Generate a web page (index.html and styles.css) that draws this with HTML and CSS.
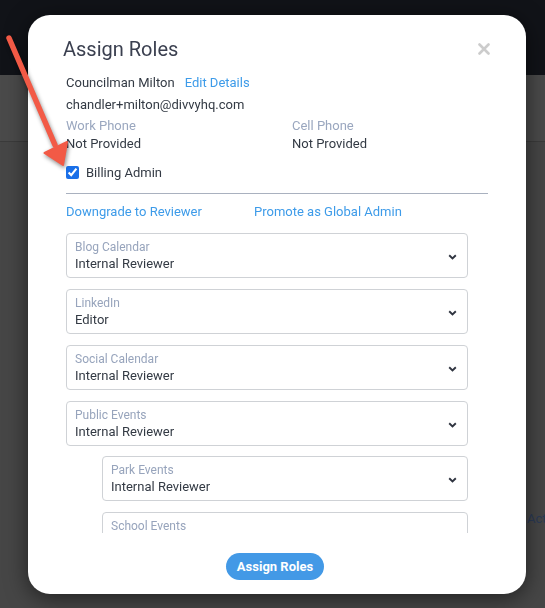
FILE: index.html
```html
<!DOCTYPE html>
<html>
<head>
<meta charset="utf-8">
<link rel="stylesheet" href="styles.css">
</head>
<body>
<div class="page">
  <div class="topbar"></div>
  <div class="band"></div>
  <div class="main"><span class="act">Actions</span></div>
</div>

<div class="modal">
  <div class="modal-head">
    <h2 class="title">Assign Roles</h2>
    <svg class="close" width="12" height="12" viewBox="0 0 12 12"><path d="M1.5 1.5 L10.5 10.5 M10.5 1.5 L1.5 10.5" stroke="#cccccc" stroke-width="2.6" stroke-linecap="round"/></svg>
  </div>
  <div class="modal-body">
    <div class="row name-row"><span class="name">Councilman Milton</span><a class="link edit">Edit Details</a></div>
    <div class="row email">chandler+milton@divvyhq.com</div>
    <div class="phones">
      <div class="phone"><div class="plabel">Work Phone</div><div class="pval">Not Provided</div></div>
      <div class="phone"><div class="plabel">Cell Phone</div><div class="pval">Not Provided</div></div>
    </div>
    <label class="check-row"><input type="checkbox" checked class="cb"><span>Billing Admin</span></label>
    <div class="divider"></div>
    <div class="actions"><a class="link a1">Downgrade to Reviewer</a><a class="link">Promote as Global Admin</a></div>
    <div class="selects">
      <div class="sel"><div class="stext"><div class="slabel">Blog Calendar</div><div class="sval">Internal Reviewer</div></div><svg class="chev" width="9" height="6" viewBox="0 0 9 6"><path d="M1.2 1.2 L4.5 4.4 L7.8 1.2" fill="none" stroke="#2f3440" stroke-width="1.9"/></svg></div>
      <div class="sel"><div class="stext"><div class="slabel">LinkedIn</div><div class="sval">Editor</div></div><svg class="chev" width="9" height="6" viewBox="0 0 9 6"><path d="M1.2 1.2 L4.5 4.4 L7.8 1.2" fill="none" stroke="#2f3440" stroke-width="1.9"/></svg></div>
      <div class="sel"><div class="stext"><div class="slabel">Social Calendar</div><div class="sval">Internal Reviewer</div></div><svg class="chev" width="9" height="6" viewBox="0 0 9 6"><path d="M1.2 1.2 L4.5 4.4 L7.8 1.2" fill="none" stroke="#2f3440" stroke-width="1.9"/></svg></div>
      <div class="sel last-top"><div class="stext"><div class="slabel">Public Events</div><div class="sval">Internal Reviewer</div></div><svg class="chev" width="9" height="6" viewBox="0 0 9 6"><path d="M1.2 1.2 L4.5 4.4 L7.8 1.2" fill="none" stroke="#2f3440" stroke-width="1.9"/></svg></div>
      <div class="sel sub"><div class="stext"><div class="slabel">Park Events</div><div class="sval">Internal Reviewer</div></div><svg class="chev" width="9" height="6" viewBox="0 0 9 6"><path d="M1.2 1.2 L4.5 4.4 L7.8 1.2" fill="none" stroke="#2f3440" stroke-width="1.9"/></svg></div>
      <div class="sel sub"><div class="stext"><div class="slabel">School Events</div><div class="sval">Internal Reviewer</div></div><svg class="chev" width="9" height="6" viewBox="0 0 9 6"><path d="M1.2 1.2 L4.5 4.4 L7.8 1.2" fill="none" stroke="#2f3440" stroke-width="1.9"/></svg></div>
    </div>
  </div>
  <div class="modal-foot"><button class="btn">Assign Roles</button></div>
</div>

<svg class="arrow" width="545" height="608" viewBox="0 0 545 608">
  <line x1="9" y1="38" x2="55" y2="145" stroke="#f25a46" stroke-width="5.5" stroke-linecap="round"/>
  <polygon points="63,165 44.5,153 67,142" fill="#f25a46" stroke="#f25a46" stroke-width="2" stroke-linejoin="round"/>
</svg>
</body>
</html>
```

FILE: styles.css
```css
* { box-sizing: border-box; }
html, body { margin: 0; padding: 0; }
body {
  width: 545px;
  height: 608px;
  overflow: hidden;
  font-family: Roboto, "Liberation Sans", Arial, sans-serif;
  background: #464646;
}
.page { height: 608px; }
.topbar { height: 75px; background: #111318; }
.band { height: 67px; background: #4a4a4a; border-bottom: 1px solid #3b3b3b; }
.main { padding-top: 366px; padding-left: 527px; white-space: nowrap; }
.act { font-size: 13px; color: #2b3a55; line-height: 18px; }

.modal {
  position: fixed;
  left: 28px;
  top: 15px;
  width: 498px;
  height: 579px;
  background: #ffffff;
  border-radius: 22px;
  box-shadow: 0 4px 22px rgba(0,0,0,0.55);
  display: flex;
  flex-direction: column;
  padding: 22px 0 0 0;
}
.modal-head {
  display: flex;
  justify-content: space-between;
  align-items: center;
  padding: 0 36px 0 35px;
  height: 24px;
}
.title {
  margin: 0;
  font-size: 20px;
  font-weight: 400;
  line-height: 24px;
  color: #3b4050;
}

.modal-body {
  margin-top: 11px;
  height: 461px;
  overflow: hidden;
  padding: 0 38px 0 38px;
  color: #333a44;
  font-size: 13px;
}
.row { line-height: 22px; height: 22px; }
.link { color: #3d9be9; text-decoration: none; }
.edit { margin-left: 10px; }
.phones { display: flex; }
.phone { flex: none; width: 226px; }
.plabel { color: #9aa7bf; line-height: 19px; height: 19px; }
.pval { line-height: 18px; height: 18px; }
.check-row {
  display: flex;
  align-items: center;
  gap: 7px;
  height: 22px;
  margin-top: 8px;
}
.cb {
  margin: 0;
  width: 13px;
  height: 13px;
  accent-color: #1a6fe8;
}
.divider {
  margin-top: 10px;
  height: 1px;
  background: #a9b1bf;
  width: 422px;
}
.actions {
  display: flex;
  line-height: 20px;
  height: 20px;
  margin-top: 8px;
}
.a1 { width: 188px; }
.selects { margin-top: 11px; width: 402px; }
.sel {
  height: 45px;
  border: 1px solid #cfd2d6;
  border-radius: 4px;
  display: flex;
  align-items: center;
  justify-content: space-between;
  padding: 0 10px 0 8px;
  margin-bottom: 11px;
}
.sel.last-top { margin-bottom: 10px; }
.sel.sub { margin-left: 36px; }
.stext { padding-top: 0; }
.slabel { font-size: 12px; color: #97a4bc; line-height: 16px; }
.sval { font-size: 13px; color: #333a44; line-height: 18px; }
.chev { display: block; margin-top: 2px; }

.modal-foot {
  display: flex;
  justify-content: center;
  padding-top: 20px;
  padding-right: 4px;
}
.btn {
  height: 27px;
  width: 98px;
  border: none;
  border-radius: 14px;
  background: #4399e6;
  color: #ffffff;
  font-family: Roboto, "Liberation Sans", Arial, sans-serif;
  font-weight: 700;
  font-size: 13px;
  padding: 0;
}

.arrow {
  position: fixed;
  left: 0;
  top: 0;
  pointer-events: none;
  filter: drop-shadow(1px 2px 2px rgba(0,0,0,0.45));
}
```
